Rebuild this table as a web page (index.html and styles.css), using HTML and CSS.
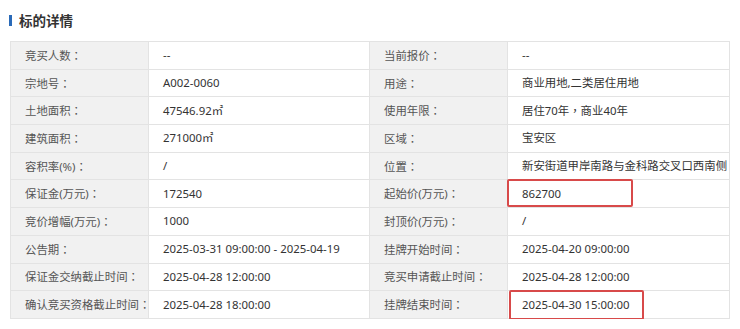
FILE: index.html
```html
<!DOCTYPE html>
<html lang="zh-CN">
<head>
<meta charset="utf-8">
<link rel="stylesheet" href="styles.css">
</head>
<body>
<div class="page">
  <h2 class="title"><span class="bar"></span>标的详情</h2>
  <table class="detail">
    <colgroup><col class="c-label"><col class="c-value"><col class="c-label"><col class="c-value2"></colgroup>
    <tbody>
      <tr><td class="lbl">竞买人数<span class="colon" lang="zh-TW">：</span></td><td class="val">--</td><td class="lbl">当前报价<span class="colon" lang="zh-TW">：</span></td><td class="val">--</td></tr>
      <tr><td class="lbl">宗地号<span class="colon" lang="zh-TW">：</span></td><td class="val">A002-0060</td><td class="lbl">用途<span class="colon" lang="zh-TW">：</span></td><td class="val">商业用地,二类居住用地</td></tr>
      <tr><td class="lbl">土地面积<span class="colon" lang="zh-TW">：</span></td><td class="val">47546.92㎡</td><td class="lbl">使用年限<span class="colon" lang="zh-TW">：</span></td><td class="val">居住70年<span class="colon" lang="zh-TW">，</span>商业40年</td></tr>
      <tr><td class="lbl">建筑面积<span class="colon" lang="zh-TW">：</span></td><td class="val">271000㎡</td><td class="lbl">区域<span class="colon" lang="zh-TW">：</span></td><td class="val">宝安区</td></tr>
      <tr><td class="lbl">容积率(%)<span class="colon" lang="zh-TW">：</span></td><td class="val">/</td><td class="lbl">位置<span class="colon" lang="zh-TW">：</span></td><td class="val">新安街道甲岸南路与金科路交叉口西南侧</td></tr>
      <tr><td class="lbl">保证金(万元)<span class="colon" lang="zh-TW">：</span></td><td class="val">172540</td><td class="lbl">起始价(万元)<span class="colon" lang="zh-TW">：</span></td><td class="val mark"><span class="hl hl1"></span>862700</td></tr>
      <tr><td class="lbl">竞价增幅(万元)<span class="colon" lang="zh-TW">：</span></td><td class="val">1000</td><td class="lbl">封顶价(万元)<span class="colon" lang="zh-TW">：</span></td><td class="val">/</td></tr>
      <tr><td class="lbl">公告期<span class="colon" lang="zh-TW">：</span></td><td class="val">2025-03-31 09:00:00 - 2025-04-19</td><td class="lbl">挂牌开始时间<span class="colon" lang="zh-TW">：</span></td><td class="val">2025-04-20 09:00:00</td></tr>
      <tr><td class="lbl">保证金交纳截止时间<span class="colon" lang="zh-TW">：</span></td><td class="val">2025-04-28 12:00:00</td><td class="lbl">竞买申请截止时间<span class="colon" lang="zh-TW">：</span></td><td class="val">2025-04-28 12:00:00</td></tr>
      <tr><td class="lbl">确认竞买资格截止时间<span class="colon" lang="zh-TW">：</span></td><td class="val">2025-04-28 18:00:00</td><td class="lbl">挂牌结束时间<span class="colon" lang="zh-TW">：</span></td><td class="val mark"><span class="hl hl2"></span>2025-04-30 15:00:00</td></tr>
    </tbody>
  </table>
</div>
</body>
</html>
```
FILE: styles.css
```css
html, body {
  margin: 0;
  padding: 0;
  background: #ffffff;
}
body {
  font-family: "Noto Sans", "Noto Sans CJK SC", sans-serif;
  color: #333;
}
.page {
  padding: 13px 11px 0 9px;
}
.title {
  display: flex;
  align-items: center;
  margin: 0;
  height: 14px;
  font-size: 13.5px;
  font-weight: 600;
  color: #333;
  font-family: "Noto Sans CJK SC", sans-serif;
}
.bar {
  display: inline-block;
  width: 3px;
  height: 11px;
  background: #2a6ab8;
  margin-right: 7px;
}
.detail {
  margin-top: 14px;
  margin-left: 1px;
  width: 719px;
  border-collapse: collapse;
  table-layout: fixed;
  font-size: 11.4px;
}
.c-label { width: 138px; }
.c-value { width: 221px; }
.c-value2 { width: 222px; }
.detail td {
  height: 26.7px;
  padding: 0 0 0 14px;
  border: 1px solid #e3e3e3;
  white-space: nowrap;
  line-height: 16px;
}
.colon {
  font-family: "Noto Sans CJK TC", sans-serif;
}
.lbl {
  background: #f1f1f1;
  color: #555;
}
.val {
  background: #fff;
  color: #333;
}
.mark {
  position: relative;
}
.hl {
  position: absolute;
  border: 2px solid #d84a4a;
  border-radius: 2px;
  box-sizing: border-box;
  pointer-events: none;
}
.hl1 {
  left: -1px;
  top: -1px;
  width: 126px;
  height: 28px;
}
.hl2 {
  left: 1px;
  top: -1px;
  width: 135px;
  height: 30px;
}
```
